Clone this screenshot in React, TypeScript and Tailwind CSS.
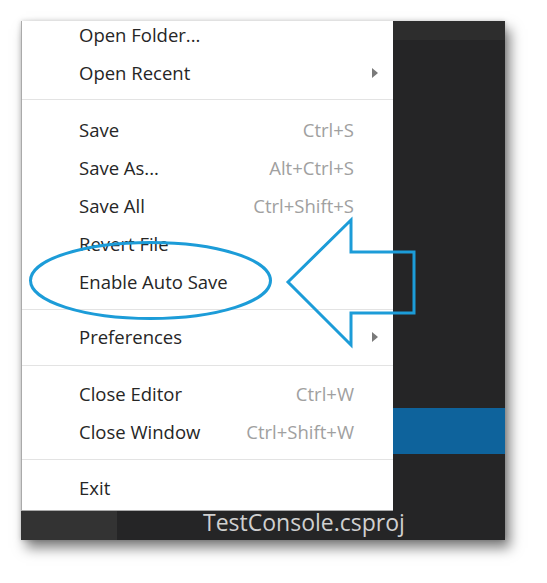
import { type FC } from 'react'

type Entry =
  | { kind: 'item'; label: string; shortcut?: string; submenu?: boolean }
  | { kind: 'sep'; h: string; pt: string }

// separator heights tuned per gap so the rows land where the screenshot has them
const ENTRIES: Entry[] = [
  { kind: 'item', label: 'Open Folder...' },
  { kind: 'item', label: 'Open Recent', submenu: true },
  { kind: 'sep', h: 'h-[19px]', pt: 'pt-[7px]' },
  { kind: 'item', label: 'Save', shortcut: 'Ctrl+S' },
  { kind: 'item', label: 'Save As...', shortcut: 'Alt+Ctrl+S' },
  { kind: 'item', label: 'Save All', shortcut: 'Ctrl+Shift+S' },
  { kind: 'item', label: 'Revert File' },
  { kind: 'item', label: 'Enable Auto Save' },
  { kind: 'sep', h: 'h-[17px]', pt: 'pt-[8px]' },
  { kind: 'item', label: 'Preferences', submenu: true },
  { kind: 'sep', h: 'h-[19px]', pt: 'pt-[9px]' },
  { kind: 'item', label: 'Close Editor', shortcut: 'Ctrl+W' },
  { kind: 'item', label: 'Close Window', shortcut: 'Ctrl+Shift+W' },
  { kind: 'sep', h: 'h-[18px]', pt: 'pt-[8px]' },
  { kind: 'item', label: 'Exit' },
]

const SubmenuArrow: FC = () => (
  <svg width="6" height="10" viewBox="0 0 6 10" aria-hidden="true">
    <polygon points="0,0 6,5 0,10" fill="#7a7a7a" />
  </svg>
)

const FileMenu: FC = () => (
  <div className="absolute left-0 top-0 h-[490px] w-[372px] overflow-hidden border-b border-l border-[#aaaaaa] bg-white font-['Open_Sans',sans-serif] text-[18.5px]">
    <div className="-mt-[5px] flex flex-col">
      {ENTRIES.map((e, i) =>
        e.kind === 'sep' ? (
          <div key={i} className={`${e.h} ${e.pt}`}>
            <div className="h-px bg-[#e3e3e3]" />
          </div>
        ) : (
          <div key={i} className="flex h-[38px] items-center pl-[57px]">
            <span className="flex-1 text-[#262626]">{e.label}</span>
            {e.shortcut && <span className="text-[#a0a0a0]">{e.shortcut}</span>}
            <span className="flex w-[39px] pl-[18px]">{e.submenu && <SubmenuArrow />}</span>
          </div>
        )
      )}
    </div>
  </div>
)

const Callouts: FC = () => (
  <svg
    className="pointer-events-none absolute left-0 top-0"
    width="547"
    height="583"
    viewBox="0 0 547 583"
    aria-hidden="true"
  >
    <ellipse cx="150.5" cy="280.5" rx="120" ry="38" fill="none" stroke="#1c9cd8" strokeWidth="3" />
    <polygon
      points="288,282 351,220 351,252 414,252 414,313 351,313 351,345"
      fill="none"
      stroke="#1c9cd8"
      strokeWidth="3"
      strokeLinejoin="miter"
    />
  </svg>
)

export default function App() {
  return (
    <div className="relative h-[583px] w-[547px] bg-white pl-[21px] pt-[21px]">
      {/* Screenshot of the editor window */}
      <div className="relative flex h-[519px] w-[484px] flex-col bg-[#252526] shadow-[5px_8px_12px_rgba(0,0,0,0.5),0_0_5px_rgba(0,0,0,0.18)]">
        <div className="h-[19px] bg-[#2d2d2d]" />
        <div className="h-[368px]" />
        <div className="h-[46px] bg-[#0e639c]" />
        <div className="flex-1" />
        <div className="flex h-[29px]">
          <div className="w-[96px] bg-[#333333]" />
          <div className="flex-1 pl-[86px] font-['Open_Sans',sans-serif] text-[23px] leading-[22px] text-[#d0d0d0]">
            TestConsole.csproj
          </div>
        </div>

        <FileMenu />
      </div>

      <Callouts />
    </div>
  )
}
